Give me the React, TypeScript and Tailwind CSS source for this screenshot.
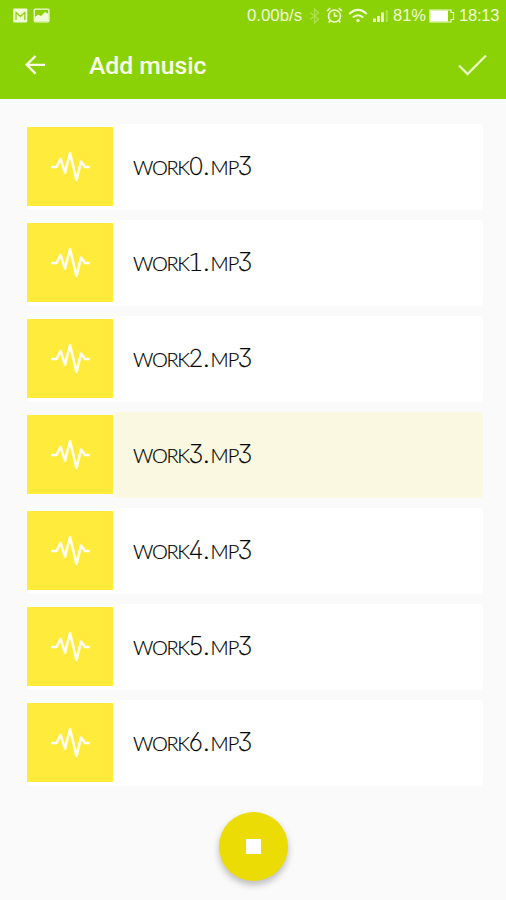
import React from "react";

const tracks = [0, 1, 2, 3, 4, 5, 6];

function Digit({ value }: { value: number }) {
  const family = value === 1 ? "font-['DejaVu_Sans']" : "font-['Inter']";
  return (
    <span className={`inline-block w-4 text-center text-[25px] font-extralight [font-feature-settings:'cv02','cv03','cv09'] ${family}`}>
      {value}
    </span>
  );
}

function FileName({ index }: { index: number }) {
  return (
    <div className="mb-px ml-5 flex items-baseline whitespace-nowrap font-['Lato',sans-serif] text-[20px] leading-[30px] font-light text-black [-webkit-text-stroke:0.2px_black]">
      <span className="w-[55px] tracking-[-1.300px]">WORK</span>
      <Digit value={index} />
      <span className="w-[6.500px] font-normal">.</span>
      <span className="w-[26.500px] tracking-[-1px]">MP</span>
      <Digit value={3} />
    </div>
  );
}

function Pulse() {
  return (
    <svg width="40" height="34" viewBox="0 0 40 34" fill="none" stroke="#fffef0" strokeWidth="2.600" strokeLinejoin="round" strokeLinecap="round">
      <path d="M2 18H6.500L10.500 10L15 23.500L20 4L26.500 31L31 12.500L35 18H39" />
    </svg>
  );
}

function StatusBar() {
  return (
    <div className="flex h-8 items-center pl-[13px] font-['Liberation_Sans',sans-serif] text-[17px] text-[#f2fbd8]">
      <svg className="mb-[2px]" width="15" height="15" viewBox="0 0 15 15">
        <rect x=".3" y=".5" width="14" height="14" rx="1" fill="currentColor" />
        <path d="M2.500 4L7.400 8.500L12.300 4M3 12V5M11.800 12V5" stroke="#8ad106" strokeWidth="1.200" fill="none" />
      </svg>
      <svg className="mb-[2px] ml-[5px]" width="17" height="15" viewBox="0 0 17 15">
        <rect x="1.300" y="1.200" width="14.600" height="12.600" rx="1" stroke="currentColor" strokeWidth="1.300" fill="none" />
        <path d="M2 13V9L5 6.500L8 8L12 4L15.500 6V13Z" fill="currentColor" />
      </svg>
      <span className="mb-px ml-[197px] w-[57px] text-[16.800px]">0.00b/s</span>
      <svg className="mb-px ml-[5px] opacity-35" width="11" height="16" viewBox="0 0 11 16" fill="none" stroke="currentColor" strokeWidth="1.300">
        <path d="M1 4.500L9.500 11L5.500 15V1L9.500 5L1 11.500" />
      </svg>
      <svg className="mb-px ml-[6px]" width="17" height="17" viewBox="0 0 17 17" fill="none" stroke="currentColor" strokeWidth="1.600">
        <circle cx="8.500" cy="9" r="6" />
        <path d="M8.500 5.500V9H11.500M1 4L4.200 1.200M16 4L12.800 1.200M4 13.500L2.800 15.500M13 13.500L14.200 15.500" />
      </svg>
      <svg className="mb-px ml-[5px]" width="20" height="15" viewBox="0 0 20 15" fill="none" stroke="currentColor" strokeWidth="2">
        <path d="M1.200 6Q10-2.200 18.800 6M4.800 9.500Q10 5 15.200 9.500" />
        <circle cx="10" cy="12.500" r="1.700" fill="currentColor" stroke="none" />
      </svg>
      <svg className="mb-px ml-[5px]" width="16" height="14" viewBox="0 0 16 14" fill="currentColor">
        <path d="M0 9.500H2.800V13H0ZM4 7H6.800V13H4ZM8 3.500H10.800V13H8Z" />
        <path d="M12.800 1H14.800V13H12.800Z" opacity=".35" />
      </svg>
      <span className="mb-px ml-[4px] w-[34px] text-[16.500px]">81%</span>
      <svg className="mb-px ml-[2px]" width="26" height="14" viewBox="0 0 26 14">
        <path d="M1 1H22V3.500H24.500V10.500H22V13H1Z" fill="none" stroke="currentColor" strokeWidth="1.200" />
        <path d="M1.500 1.500H19V12.500H1.500Z" fill="white" />
      </svg>
      <span className="mb-px ml-[4px] text-[16.500px] tracking-[-0.2px]">18:13</span>
    </div>
  );
}

export default function App() {
  return (
    <main className="flex h-[900px] w-[506px] flex-col overflow-hidden bg-[#fafafa]">
      <header className="h-[98.500px] shrink-0 bg-[#8ad106]">
        <StatusBar />
        <div className="flex h-[66px] items-center pl-[25px]">
          <svg width="21" height="20" viewBox="0 0 21 20" fill="none" stroke="#fbffe9" strokeWidth="2.300">
            <path d="M10.500 1L1.700 9.800L10.500 18.600M1.700 9.800H20" />
          </svg>
          <h1 className="mt-px ml-[43px] w-[120px] whitespace-nowrap font-['Roboto',sans-serif] text-[24.700px] font-medium text-[#fbffe9]">Add music</h1>
          <svg className="ml-[249px]" width="29" height="22" viewBox="0 0 29 22" fill="none" stroke="#eafac4" strokeWidth="2.300">
            <path d="M1 11.500L9.500 20L28 1.500" />
          </svg>
        </div>
      </header>
      <ul className="mt-[25px] ml-[27px] flex w-[456px] flex-col gap-2.5">
        {tracks.map((n) => (
          <li key={n} className={`flex h-[86px] items-center rounded-sm ${n === 3 ? "bg-linear-to-r from-[#fafafa] from-[18%] to-[#faf8e0] to-[20%]" : "bg-white"}`}>
            <div className="mb-[1px] flex h-[79px] w-[86px] items-center justify-center bg-[#ffeb3b]">
              <Pulse />
            </div>
            <FileName index={n} />
          </li>
        ))}
      </ul>
      <button className="mt-[26.500px] ml-[219px] flex size-[69px] items-center justify-center rounded-full bg-[#ebdc06] shadow-[0_4px_7px_rgba(0,0,0,0.25)]">
        <span className="size-[15px] bg-white" />
      </button>
    </main>
  );
}
